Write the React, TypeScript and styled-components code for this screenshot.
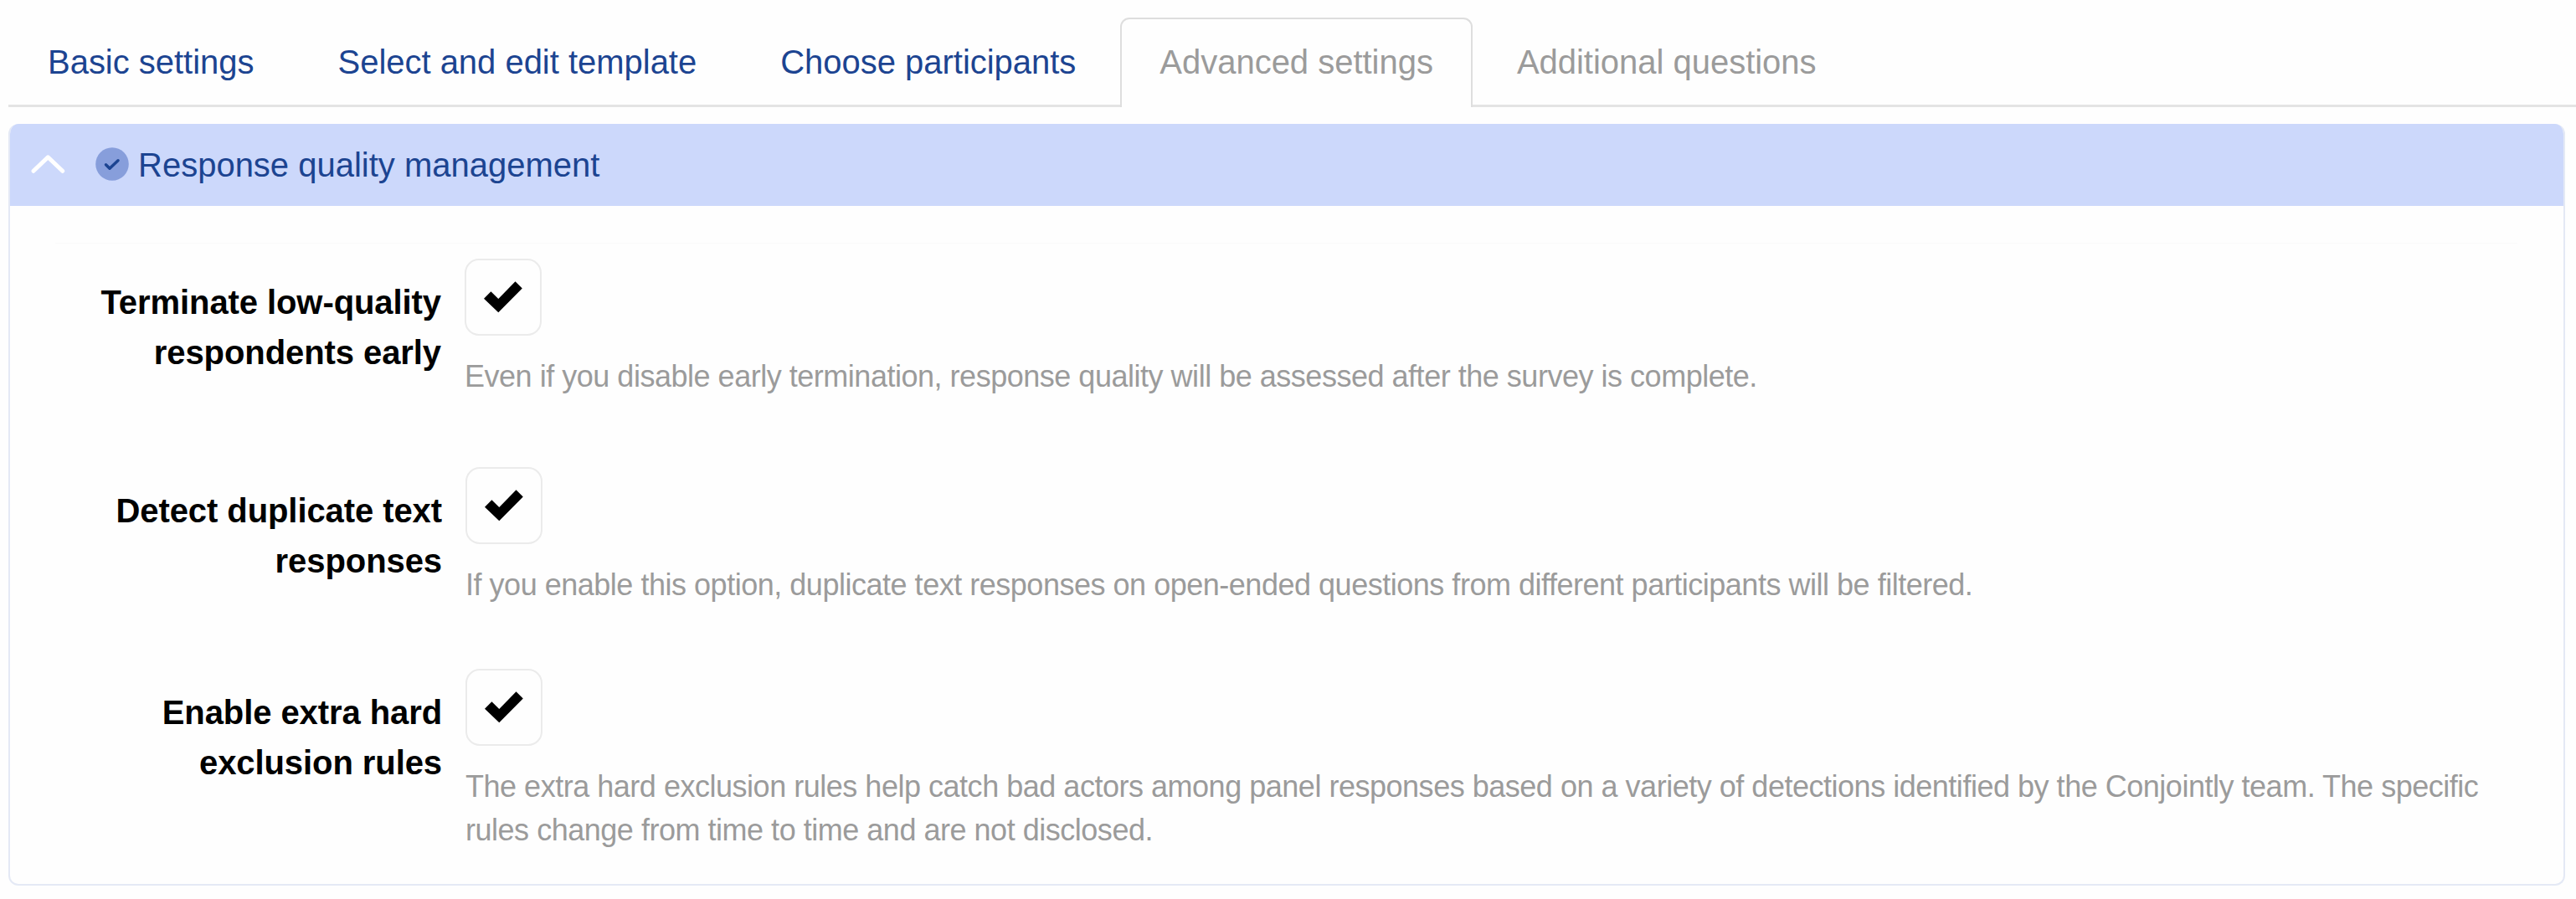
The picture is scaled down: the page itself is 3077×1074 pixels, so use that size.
import styled, { createGlobalStyle } from 'styled-components';

const GlobalStyle = createGlobalStyle`
  * {
    box-sizing: border-box;
  }

  body {
    margin: 0;
    background: #fefefe;
    font-family: "Liberation Sans", Arial, sans-serif;
    font-size: 40px;
  }
`;

const Page = styled.div`
  width: 3077px;
  height: 1074px;
  padding: 21px 0 0 10px;
  overflow: hidden;
`;

const Tabs = styled.nav`
  display: flex;
  gap: 6px;
  height: 107px;
  border-bottom: 3px solid #e4e4e4;
`;

const Tab = styled.a<{ $active?: boolean; $muted?: boolean }>`
  height: 107px;
  padding: 27px 45px 0;
  border: 2px solid ${(p) => (p.$active ? '#dedede' : 'transparent')};
  border-bottom: 0;
  border-radius: 11px 11px 0 0;
  background: ${(p) => (p.$active ? '#fefefe' : 'transparent')};
  color: ${(p) => (p.$active || p.$muted ? '#9b9b9b' : '#1c4491')};
  line-height: 48px;
  letter-spacing: -0.02px;
  white-space: nowrap;
`;

const Panel = styled.section`
  width: 3054px;
  height: 910px;
  margin-top: 20px;
  border: 2px solid #e4e9f5;
  border-top: 0;
  border-radius: 12px;
  overflow: hidden;
`;

const PanelHeader = styled.header`
  display: flex;
  align-items: center;
  height: 98px;
  margin: 0 -2px;
  padding-left: 27px;
  background: #ccd8fb;
  color: #1c4491;
`;

const StatusIcon = styled.svg`
  margin: 0 11px 3px 36px;
`;

const Rows = styled.div`
  margin: 44px 55px 0 54px;
  padding-top: 18px;
  border-top: 1px solid #fafafa;
`;

const Row = styled.div<{ $height: number; $shift?: number }>`
  display: flex;
  height: ${(p) => p.$height}px;
  padding-left: ${(p) => p.$shift || 0}px;
`;

const Label = styled.label`
  width: 461px;
  padding-top: 23px;
  font-weight: bold;
  line-height: 59.5px;
  letter-spacing: -0.08px;
  text-align: right;
  color: #000;
`;

const Field = styled.div`
  width: 2440px;
  margin-left: 28px;
`;

const Checkbox = styled.div`
  display: flex;
  width: 92px;
  height: 92px;
  padding: 25px 0 0 21px;
  border: 2px solid #ebebeb;
  border-radius: 17px;
`;

const Hint = styled.p`
  margin: 23px 0 0;
  font-size: 36px;
  line-height: 51.5px;
  letter-spacing: -0.48px;
  color: #9b9b9b;
`;

const tabs = [
  { title: 'Basic settings' },
  { title: 'Select and edit template' },
  { title: 'Choose participants' },
  { title: 'Advanced settings', active: true },
  { title: 'Additional questions', muted: true },
];

const options = [
  {
    label: ['Terminate low-quality', 'respondents early'],
    hint: 'Even if you disable early termination, response quality will be assessed after the survey is complete.',
    height: 249,
    shift: 0,
  },
  {
    label: ['Detect duplicate text', 'responses'],
    hint: 'If you enable this option, duplicate text responses on open-ended questions from different participants will be filtered.',
    height: 241,
    shift: 1,
  },
  {
    label: ['Enable extra hard', 'exclusion rules'],
    hint: 'The extra hard exclusion rules help catch bad actors among panel responses based on a variety of detections identified by the Conjointly team. The specific rules change from time to time and are not disclosed.',
    height: 250,
    shift: 1,
  },
];

const App = () => {
  return (
    <>
      <GlobalStyle />
      <Page>
        <Tabs>
          {tabs.map((tab) => (
            <Tab key={tab.title} $active={tab.active} $muted={tab.muted}>{tab.title}</Tab>
          ))}
        </Tabs>
        <Panel>
          <PanelHeader>
            <svg width="41" height="24" viewBox="0 0 41 24" fill="none">
              <path
                d="M3 19.3L20.3 2.8L37.7 19.3"
                stroke="#fff"
                strokeWidth="5"
                strokeLinecap="round"
                strokeLinejoin="round"
              />
            </svg>
            <StatusIcon width="40" height="40" viewBox="0 0 40 40" fill="none">
              <circle cx="20" cy="20" r="19.8" fill="#879edb" />
              <path
                d="M12.5 20.8L17 25.2L27 15.8"
                stroke="#1c4491"
                strokeWidth="3.5"
                strokeLinecap="round"
                strokeLinejoin="round"
              />
            </StatusIcon>
            <span>Response quality management</span>
          </PanelHeader>
          <Rows>
            {options.map((option) => (
              <Row key={option.label[0]} $height={option.height} $shift={option.shift}>
                <Label>
                  {option.label[0]}
                  <br />
                  {option.label[1]}
                </Label>
                <Field>
                  <Checkbox>
                    <svg width="46" height="38" viewBox="0 0 46 38">
                      <path d="M37.5 0.2L45.8 8.5L17.3 37.3L0 20.7L8.4 12.2L17.3 21Z" fill="#000" />
                    </svg>
                  </Checkbox>
                  <Hint>{option.hint}</Hint>
                </Field>
              </Row>
            ))}
          </Rows>
        </Panel>
      </Page>
    </>
  );
};

export default App;
